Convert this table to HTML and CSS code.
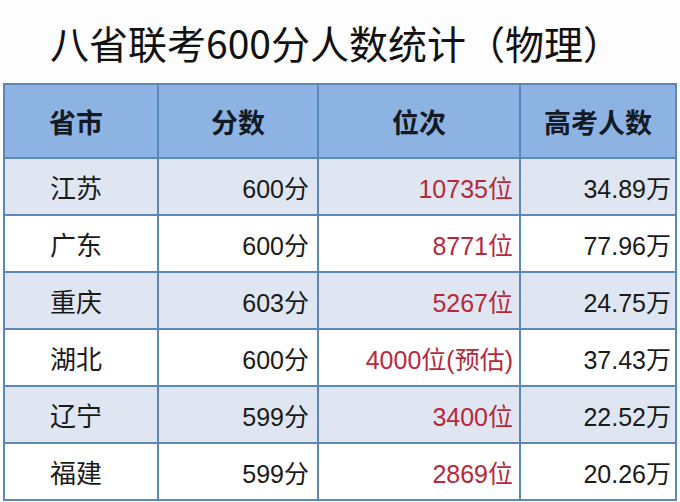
FILE: index.html
```html
<!DOCTYPE html>
<html lang="zh-CN">
<head>
<meta charset="utf-8">
<link rel="stylesheet" href="styles.css">
</head>
<body>
<div class="page">
  <h1 class="title">八省联考600分人数统计（物理）</h1>
  <table class="stats">
    <colgroup>
      <col class="c1"><col class="c2"><col class="c3"><col class="c4">
    </colgroup>
    <thead>
      <tr><th class="prov">省市</th><th>分数</th><th>位次</th><th>高考人数</th></tr>
    </thead>
    <tbody>
      <tr class="alt"><td class="prov">江苏</td><td class="num">600分</td><td class="num red">10735位</td><td class="num">34.89万</td></tr>
      <tr><td class="prov">广东</td><td class="num">600分</td><td class="num red">8771位</td><td class="num">77.96万</td></tr>
      <tr class="alt"><td class="prov">重庆</td><td class="num">603分</td><td class="num red">5267位</td><td class="num">24.75万</td></tr>
      <tr><td class="prov">湖北</td><td class="num">600分</td><td class="num red">4000位(预估)</td><td class="num">37.43万</td></tr>
      <tr class="alt"><td class="prov">辽宁</td><td class="num">599分</td><td class="num red">3400位</td><td class="num">22.52万</td></tr>
      <tr><td class="prov">福建</td><td class="num">599分</td><td class="num red">2869位</td><td class="num">20.26万</td></tr>
    </tbody>
  </table>
</div>
</body>
</html>
```
FILE: styles.css
```css
html, body {
  margin: 0;
  padding: 0;
  background: #ffffff;
}
.page {
  width: 680px;
  height: 502px;
  overflow: hidden;
  font-family: "Liberation Sans", "Noto Sans CJK SC", sans-serif;
  color: #111;
}
.title {
  margin: 0;
  height: 83px;
  padding-left: 50px;
  box-sizing: border-box;
  display: flex;
  align-items: center;
  font-family: "Noto Sans CJK SC", sans-serif;
  font-weight: 400;
  font-size: 39px;
  letter-spacing: 0;
  color: #111;
  background: #fdfdfd;
}
.stats {
  margin-left: 3px;
  border-collapse: collapse;
  table-layout: fixed;
  width: 672px;
}
.c1 { width: 154px; }
.c2 { width: 160px; }
.c3 { width: 202px; }
.c4 { width: 156px; }
.stats th, .stats td {
  border: 2px solid #5b87b9;
  padding: 0;
}
.stats th {
  height: 72px;
  background: #8db3e2;
  font-family: "Noto Sans CJK SC", sans-serif;
  font-weight: 700;
  font-size: 27px;
  color: #121a26;
  text-align: center;
}
.stats th.prov {
  padding-right: 10px;
}
.stats td {
  height: 55px;
  font-size: 25px;
  color: #1a1a1a;
}
.stats tr.alt td {
  background: #dfe6f1;
}
.stats td.prov {
  font-family: "Noto Sans CJK SC", sans-serif;
  font-size: 26px;
  text-align: left;
  padding-left: 45px;
}
.stats td.num {
  text-align: right;
  padding-right: 8px;
}
.stats td.red {
  color: #b8283a;
  padding-right: 6px;
}
.stats td:last-child {
  padding-right: 4px;
}
```
